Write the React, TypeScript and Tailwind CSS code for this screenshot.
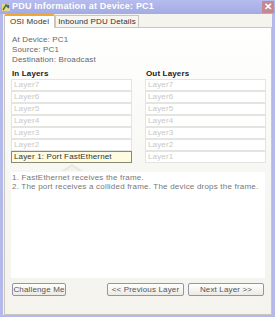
import React from "react";

const layers = ["Layer7", "Layer6", "Layer5", "Layer4", "Layer3", "Layer2"];

function LayerBox({ label, active }: { label: string; active?: boolean }) {
  return (
    <div
      className={
        active
          ? "h-[12px] whitespace-nowrap border border-[#8a8a70] bg-[#fdfbe2] px-[2px] text-[8px] leading-[10px] text-[#333]"
          : "h-[12px] whitespace-nowrap border border-[#e4e4e0] bg-white px-[2px] text-[8px] leading-[10px] text-[#c8c8c8]"
      }
    >
      {label}
    </div>
  );
}

function Btn({ children, className }: { children: React.ReactNode; className: string }) {
  return (
    <div
      className={
        "flex h-[13px] items-center justify-center whitespace-nowrap rounded-[2px] border border-[#8e96a8] bg-gradient-to-b from-white to-[#eceae4] text-[8px] text-[#555] " +
        className
      }
    >
      {children}
    </div>
  );
}

export default function App() {
  return (
    <div
      className="relative h-[320px] w-[275px] overflow-hidden bg-white tracking-[0.15px]"
      style={{ fontFamily: "Tahoma, 'Liberation Sans', sans-serif" }}
    >
      <div className="flex h-[317px] flex-col border-x-[3px] border-b-[2px] border-[#b3b9ea] bg-[#f4f3ee]">
        {/* title bar */}
        <div className="-mx-[3px] flex h-[14px] items-center bg-gradient-to-b from-[#b6bcf0] to-[#a4abe3] pl-[2px] pr-[1px]">
          <svg width="9" height="9" viewBox="0 0 9 9" className="mr-[1px]">
            <rect x="0" y="1" width="8" height="7" fill="#e8d890" />
            <path d="M1 7 L4 2 L7 5" stroke="#4a7a30" strokeWidth="1.5" fill="none" />
            <circle cx="6" cy="3" r="1.5" fill="#3c6ab0" />
          </svg>
          <span className="whitespace-nowrap text-[9px] font-bold tracking-[0.2px] text-white">PDU Information at Device: PC1</span>
          <div className="ml-auto flex h-[12px] w-[12px] items-center justify-center rounded-[1px] bg-[#c4888e] text-[10px] font-bold leading-none text-white">
            ✕
          </div>
        </div>

        {/* tabs */}
        <div className="flex h-[14px] items-end pl-[1px] pt-[1px]">
          <div className="h-[14px] w-[51px] whitespace-nowrap rounded-t-[2px] border-x border-t-2 border-x-[#c8c6be] border-t-[#f0a830] bg-white text-center text-[8px] leading-[11px] text-[#333]">
            OSI Model
          </div>
          <div className="h-[13px] w-[84px] whitespace-nowrap border-x border-t border-b border-[#c8c6be] bg-[#f6f5f0] text-center text-[8px] leading-[11px] text-[#333]">
            Inbound PDU Details
          </div>
          <div className="h-[1px] flex-1 bg-[#c8c6be]" />
        </div>

        {/* panel */}
        <div className="ml-[1px] flex flex-1 flex-col border-r border-b border-l border-[#c8c6be] bg-gradient-to-b from-white via-[#f7f7f3] to-[#f4f3ee]">
          <div className="pl-[7px] pt-[7px] text-[8px] leading-[10px] text-[#666]">
            <div>At Device: PC1</div>
            <div>Source: PC1</div>
            <div>Destination: Broadcast</div>
          </div>

          <div className="mt-[4px] flex pl-[6px]">
            <div className="w-[121px]">
              <div className="pl-[1px] text-[8px] font-bold leading-[10px] text-[#222]">In Layers</div>
              <div className="flex flex-col">
                {layers.map((l) => (
                  <LayerBox key={l} label={l} />
                ))}
                <LayerBox label="Layer 1: Port FastEthernet" active />
              </div>
              <div className="flex justify-center pt-[1px]">
                <svg width="22" height="7" viewBox="0 0 22 7">
                  <path d="M0 7 L11 0 L22 7 Z" fill="#e8e7e0" />
                  <path d="M4 7 L11 2.5 L18 7 Z" fill="#f4f3ee" />
                </svg>
              </div>
            </div>
            <div className="ml-[13px] w-[121px]">
              <div className="pl-[1px] text-[8px] font-bold leading-[10px] text-[#222]">Out Layers</div>
              <div className="flex flex-col">
                {[...layers, "Layer1"].map((l) => (
                  <LayerBox key={l} label={l} />
                ))}
              </div>
            </div>
          </div>

          <div className="mx-[6px] mt-[1px] h-[106px] whitespace-nowrap bg-white px-[1px] pt-[1px] text-[8px] leading-[9px] tracking-[0.2px] text-[#777]">
            <div>1. FastEthernet receives the frame.</div>
            <div>2. The port receives a collided frame. The device drops the frame.</div>
          </div>

          <div className="mt-[5px] flex pl-[7px] pr-[7px]">
            <Btn className="w-[54px]">Challenge Me</Btn>
            <Btn className="ml-auto w-[77px]">&lt;&lt; Previous Layer</Btn>
            <Btn className="ml-[4px] w-[76px]">Next Layer &gt;&gt;</Btn>
          </div>
        </div>
      </div>
    </div>
  );
}
